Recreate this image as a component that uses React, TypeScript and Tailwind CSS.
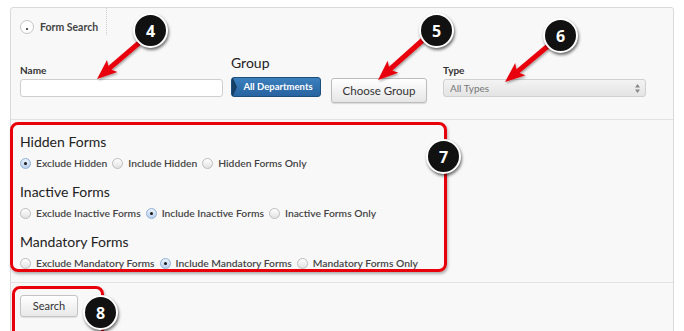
import React from "react";

type Pt = [number, number];

// builds a red annotation arrow polygon from tail to tip
const arrowPoints = (tail: Pt, tip: Pt, w = 5, hl = 17, hw = 16): string => {
  const dx = tip[0] - tail[0];
  const dy = tip[1] - tail[1];
  const len = Math.hypot(dx, dy);
  const ux = dx / len;
  const uy = dy / len;
  const px = -uy;
  const py = ux;
  const bx = tip[0] - ux * hl;
  const by = tip[1] - uy * hl;
  const pts: Pt[] = [
    [tail[0] + (px * w) / 2, tail[1] + (py * w) / 2],
    [bx + (px * w) / 2, by + (py * w) / 2],
    [bx - ux * 3 + (px * hw) / 2, by - uy * 3 + (py * hw) / 2],
    tip,
    [bx - ux * 3 - (px * hw) / 2, by - uy * 3 - (py * hw) / 2],
    [bx - (px * w) / 2, by - (py * w) / 2],
    [tail[0] - (px * w) / 2, tail[1] - (py * w) / 2],
  ];
  return pts.map((p) => `${p[0].toFixed(1)},${p[1].toFixed(1)}`).join(" ");
};

const arrows: { tail: Pt; tip: Pt }[] = [
  { tail: [139, 43], tip: [97, 79] },
  { tail: [424, 39], tip: [378, 80] },
  { tail: [548, 46], tip: [505, 82] },
];

const markers = [
  { n: "4", x: 150, y: 30 },
  { n: "5", x: 436, y: 30 },
  { n: "6", x: 560, y: 35 },
  { n: "7", x: 443, y: 156 },
  { n: "8", x: 100, y: 312 },
];

const Marker: React.FC<{ n: string; x: number; y: number }> = ({ n, x, y }) => (
  <div
    className="absolute w-[35px] h-[35px] -ml-[17px] -mt-[17px] rounded-full bg-[#111] border-[2.5px] border-white shadow-[1px_2px_3px_rgba(0,0,0,0.55)] flex items-center justify-center text-white font-bold text-[16px] leading-none font-['Open_Sans',sans-serif]"
    style={{ left: x, top: y }}
  >
    {n}
  </div>
);

const Radio: React.FC<{ checked?: boolean }> = ({ checked }) =>
  checked ? (
    <span className="w-[11px] h-[11px] shrink-0 rounded-full border border-[#8fb0d6] bg-linear-to-b from-[#e8f1fb] to-[#b9d0ec] flex items-center justify-center">
      <span className="w-[3px] h-[3px] rounded-full bg-[#1a1a1a]" />
    </span>
  ) : (
    <span className="w-[11px] h-[11px] shrink-0 rounded-full border border-[#bdbdbd] bg-linear-to-b from-white to-[#e2e2e2]" />
  );

const RadioRow: React.FC<{ options: string[]; selected: number }> = ({ options, selected }) => (
  <div className="flex items-center h-[14px] mt-[6px]">
    {options.map((o, i) => (
      <div key={o} className="flex items-center gap-[5px] mr-[5px]">
        <Radio checked={i === selected} />
        <span className="text-[10.3px] font-semibold text-[#444] leading-none">{o}</span>
      </div>
    ))}
  </div>
);

const groups = [
  { title: "Hidden Forms", options: ["Exclude Hidden", "Include Hidden", "Hidden Forms Only"], selected: 0 },
  {
    title: "Inactive Forms",
    options: ["Exclude Inactive Forms", "Include Inactive Forms", "Inactive Forms Only"],
    selected: 1,
  },
  {
    title: "Mandatory Forms",
    options: ["Exclude Mandatory Forms", "Include Mandatory Forms", "Mandatory Forms Only"],
    selected: 1,
  },
];

const App: React.FC = () => {
  return (
    <div className="relative w-[684px] h-[331px] overflow-hidden bg-white font-['Lato',sans-serif]">
      <div className="ml-[10px] mt-[7px] w-[664px] h-[340px] border border-[#dadada] rounded-t-[3px] bg-[#f8f8f8]">
        {/* tab row */}
        <div className="flex h-[27px]">
          <div className="flex items-start gap-[6px] pt-[12px] pl-[9px] pr-[8px] border-r border-dotted border-[#cfcfcf]">
            <span className="w-[14px] h-[14px] rounded-full border border-[#c4c4c4] bg-white flex items-end justify-center pb-[3px]">
              <span className="w-[2.5px] h-[2.5px] rounded-full bg-[#222]" />
            </span>
            <span className="text-[10.5px] font-bold text-[#444] leading-[14px]">Form Search</span>
          </div>
        </div>

        {/* filter fields */}
        <div className="h-[85px] border-b border-[#e2e2e2] pt-[20px] pl-[9px] flex items-start">
          <div className="flex flex-col pt-[9px] w-[203px]">
            <span className="text-[10px] font-bold text-[#333] leading-[12px]">Name</span>
            <div className="mt-[3px] h-[18px] rounded-[3px] border border-[#cfcfcf] bg-white" />
          </div>
          <div className="flex flex-col ml-[8px]">
            <span className="text-[14px] text-[#222] leading-[16px]">Group</span>
            <div className="mt-[6px] h-[20px] w-[90px] rounded-[3px] border border-[#1d4f7c] bg-linear-to-b from-[#3b80bd] to-[#2763a0] flex items-center">
              <svg width="5" height="18" viewBox="0 0 5 18" className="shrink-0">
                <path d="M0 0 L1 0 L5 9 L1 18 L0 18 Z" fill="#173f66" />
              </svg>
              <span className="flex-1 text-center text-white font-bold text-[9.5px] leading-none pr-[1px]">
                All Departments
              </span>
            </div>
          </div>
          <div className="ml-[10px] mt-[23px] h-[25px] w-[96px] rounded-[3px] border border-[#bcbcbc] bg-linear-to-b from-white to-[#e6e6e6] shadow-[0_1px_1px_rgba(0,0,0,0.12)] flex items-center justify-center text-[11.5px] text-[#333]">
            Choose Group
          </div>
          <div className="flex flex-col pt-[9px] ml-[16px] w-[203px]">
            <span className="text-[10px] font-bold text-[#333] leading-[12px]">Type</span>
            <div className="mt-[3px] h-[18px] rounded-[3px] border border-[#d0d0d0] bg-linear-to-b from-[#f3f3f3] to-[#e4e4e4] flex items-center justify-between pl-[6px] pr-[5px]">
              <span className="text-[10px] text-[#777]">All Types</span>
              <svg width="5" height="9" viewBox="0 0 5 9">
                <path d="M2.5 0 L5 3.5 L0 3.5 Z M2.5 9 L5 5.5 L0 5.5 Z" fill="#888" />
              </svg>
            </div>
          </div>
        </div>

        {/* form options */}
        <div className="h-[163px] border-b border-[#e2e2e2] pt-[2px]">
          <div className="-ml-[1px] w-[437px] h-[150px] border-[3px] border-[#e8000b] rounded-[8px] shadow-[1px_2px_3px_rgba(0,0,0,0.3)] pt-[9px] pl-[7px]">
            {groups.map((g, i) => (
              <div key={g.title} className={i > 0 ? "mt-[14px]" : ""}>
                <div className="text-[14px] text-[#222] leading-[16px]">{g.title}</div>
                <RadioRow options={g.options} selected={g.selected} />
              </div>
            ))}
          </div>
        </div>

        {/* search */}
        <div className="pt-[3px]">
          <div className="ml-[1px] w-[92px] h-[52px] border-[3px] border-[#e8000b] rounded-[8px] shadow-[1px_2px_3px_rgba(0,0,0,0.3)] pt-[6px] pl-[5px]">
            <div className="w-[58px] h-[22px] rounded-[3px] border border-[#c4c4c4] bg-linear-to-b from-white to-[#e8e8e8] shadow-[0_1px_1px_rgba(0,0,0,0.1)] flex items-center justify-center text-[11px] text-[#333]">
              Search
            </div>
          </div>
        </div>
      </div>

      {/* annotation overlay */}
      <svg className="absolute left-0 top-0 pointer-events-none" width="684" height="331">
        <defs>
          <filter id="sh" x="-20%" y="-20%" width="140%" height="140%">
            <feDropShadow dx="1" dy="1.5" stdDeviation="1" floodColor="#000" floodOpacity="0.35" />
          </filter>
        </defs>
        {arrows.map((a, i) => (
          <polygon key={i} points={arrowPoints(a.tail, a.tip)} fill="#e8000b" filter="url(#sh)" />
        ))}
      </svg>
      {markers.map((m) => (
        <Marker key={m.n} {...m} />
      ))}
    </div>
  );
};

export default App;
